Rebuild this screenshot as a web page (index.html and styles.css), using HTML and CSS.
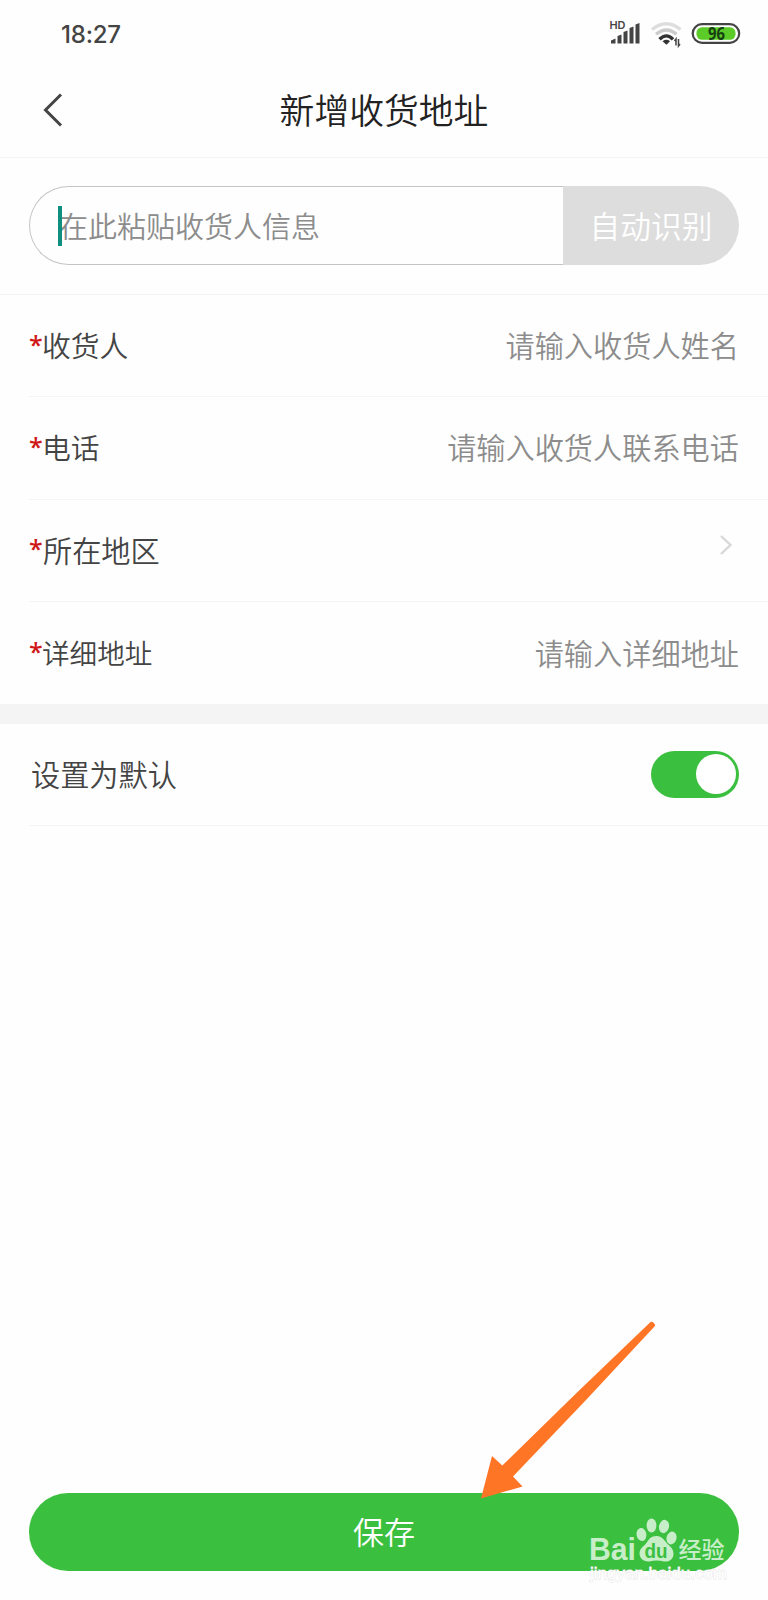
FILE: index.html
```
<!DOCTYPE html>
<html lang="zh-CN">
<head>
    <meta charset="UTF-8">
    <meta name="viewport" content="width=device-width, initial-scale=1.0">
    <title>新增收货地址</title>
    <link rel="stylesheet" href="styles.css">
</head>
<body>
    <div class="status-bar">
        <span class="time">18:27</span>
        <svg class="status-icons" width="134" height="30" viewBox="0 0 134 30">
            <text class="hd" x="-0.500" y="9" textLength="16" lengthAdjust="spacingAndGlyphs">HD</text>
            <path fill="#444" d="M1 23.500V20.500L5.500 18.500V23.500ZM7.500 23.500V16L11.500 14.500V23.500ZM13.500 23.500V12L17.500 10.500V23.500ZM19.500 23.500V8L23.500 6.500V23.500ZM25.500 23.500V4.500L29.500 3V23.500Z"/>
            <g fill="none" stroke-width="3.400">
                <path stroke="#ddd" d="M42 9.500Q56.500 -2 70.500 9.500"/>
                <path stroke="#ccc" d="M46 14.300Q56.500 5.500 66.500 14.300"/>
                <path stroke="#333" d="M49.500 19.300Q56.500 12.500 63 19.300"/>
            </g>
            <path fill="#333" d="M52.500 21.200Q56.500 18.500 60 21.200L56.500 24.700Z"/>
            <path fill="none" stroke="#444" stroke-width="1.500" d="M64.500 21L66 19V25.500M68.500 19V26L70 24"/>
            <rect x="82.700" y="4.200" width="46.500" height="18.600" rx="9.300" fill="#fff" stroke="#444" stroke-width="2.200"/>
            <rect x="86.500" y="7.200" width="39" height="12.600" rx="5.500" fill="#5bcb27"/>
            <text class="battery" x="98" y="19.500" textLength="17" lengthAdjust="spacingAndGlyphs">96</text>
        </svg>
    </div>
    <header>
        <svg class="back" width="22" height="36" viewBox="0 0 22 36">
            <path fill="none" stroke="#444" stroke-width="3" d="M18 2.500L2.500 18L18 33.500"/>
        </svg>
        <h1>新增收货地址</h1>
    </header>
    <div class="paste-box">
        <div class="paste-field">
            <input type="text" placeholder="在此粘贴收货人信息">
            <span class="caret"></span>
        </div>
        <button type="button" class="recognize">自动识别</button>
    </div>
    <form id="address-form">
        <div class="row">
            <label for="name"><span class="star">*</span>收货人</label>
            <input type="text" id="name" placeholder="请输入收货人姓名">
        </div>
        <div class="row">
            <label for="phone"><span class="star">*</span>电话</label>
            <input type="tel" id="phone" placeholder="请输入收货人联系电话">
        </div>
        <div class="row">
            <label class="wide"><span class="star">*</span>所在地区</label>
            <svg class="chevron" width="14" height="22" viewBox="0 0 14 22">
                <path fill="none" stroke="#d8d8d8" stroke-width="2.400" d="M2 2L11.500 11L2 20"/>
            </svg>
        </div>
        <div class="row last">
            <label class="narrow" for="detail"><span class="star">*</span>详细地址</label>
            <input type="text" id="detail" placeholder="请输入详细地址">
        </div>
    </form>
    <div class="divider"></div>
    <div class="row default-row">
        <span>设置为默认</span>
        <div class="toggle"><div class="knob"></div></div>
    </div>
    <footer>
        <button type="submit" form="address-form" id="save-button">保存</button>
        <svg class="arrow" width="180" height="182" viewBox="0 0 180 182">
            <path fill="#ff7526" d="M1 178.500L12 136L22.300 145.500L97 72.500L170 2.500Q172 1 173.500 2.800Q176 5 174.500 6.500L106 80L33 156.500L42.500 166.500Z"/>
        </svg>
        <svg class="watermark" width="142" height="70" viewBox="0 0 142 70">
            <text class="logo" x="1" y="45" textLength="47" lengthAdjust="spacingAndGlyphs">Bai</text>
            <g class="paw">
                <ellipse cx="53.500" cy="19.500" rx="4.900" ry="6.600" transform="rotate(-8 53.500 19.500)"/>
                <ellipse cx="63.500" cy="10.500" rx="4.900" ry="7"/>
                <ellipse cx="76" cy="11.500" rx="5" ry="6.700" transform="rotate(12 76 11.500)"/>
                <ellipse cx="83.500" cy="23" rx="5" ry="6.500" transform="rotate(15 83.500 23)"/>
                <path d="M68.500 21C74 21 76 25 79.500 29C83 32 85.500 34 85.500 39C85 45 81 47 76 46.500Q68.500 44.500 61.500 46.500C55 47 51.500 43 51.500 38C52 33 55 32 58 28.500C61 24 63 21 68.500 21Z"/>
            </g>
            <text class="du" x="56.500" y="43" textLength="23" lengthAdjust="spacingAndGlyphs">du</text>
            <text class="jingyan" x="90.500" y="43" textLength="46" lengthAdjust="spacingAndGlyphs">经验</text>
            <text class="url" x="2" y="63.500" textLength="137" lengthAdjust="spacingAndGlyphs">jingyan.baidu.com</text>
        </svg>
    </footer>
</body>
</html>
```
FILE: styles.css
```
* {
    box-sizing: border-box;
}
body {
    font-family: "Noto Sans CJK SC", sans-serif;
    font-weight: 350;
    font-size: 29.2px;
    margin: 0;
    min-height: 1600px;
    background-color: #fefefe;
    color: #444;
    display: flex;
    flex-direction: column;
}
input, button {
    font: inherit;
    border: none;
    outline: none;
    padding: 0;
    margin: 0;
    background: none;
}
input::placeholder {
    color: #8c8c8c;
    opacity: 1;
}
.status-bar {
    height: 66px;
    padding: 0 24px 0 61px;
    display: flex;
    justify-content: space-between;
    align-items: center;
}
.time {
    font-family: Inter, sans-serif;
    font-weight: 500;
    font-size: 24px;
    letter-spacing: -0.2px;
    padding-top: 3px;
}
.status-icons {
    margin-top: 4px;
    overflow: visible;
}
.hd {
    font: 600 10.5px Inter, sans-serif;
    fill: #444;
}
.battery {
    font: 700 17px "Open Sans", sans-serif;
    fill: #174012;
}
header {
    height: 92px;
    padding: 0 43px;
    border-bottom: 1px solid #f5f5f5;
    display: grid;
    grid-template-columns: 22px 1fr 22px;
    align-items: center;
}
.back {
    margin-top: -3px;
}
h1 {
    margin: -6px 0 0;
    font-size: 34.8px;
    font-weight: 350;
    line-height: 52px;
    text-align: center;
    color: #222;
}
.paste-box {
    height: 137px;
    padding: 28px 29px 29px;
    border-bottom: 1px solid #f3f3f3;
    display: flex;
}
.paste-field {
    position: relative;
    flex: 1;
    padding-left: 29px;
    display: flex;
    border: 1px solid #c4c4c4;
    border-right: none;
    border-radius: 40px 0 0 40px;
}
.paste-field input {
    width: 100%;
    padding-bottom: 2px;
    font-size: 29px;
}
.caret {
    position: absolute;
    left: 28px;
    top: 19px;
    width: 4px;
    height: 40px;
    background-color: #0f8f80;
}
.recognize {
    width: 176px;
    padding-bottom: 3px;
    border-radius: 0 40px 40px 0;
    background-color: #ddd;
    color: white;
    font-size: 30.7px;
}
.row {
    height: 102.3px;
    margin-left: 29px;
    padding-right: 29px;
    border-bottom: 1px solid #f5f5f5;
    display: flex;
    justify-content: space-between;
    align-items: center;
}
.row label {
    display: flex;
    align-items: center;
    padding-bottom: 3px;
    font-size: 28.8px;
    white-space: nowrap;
}
.row input {
    width: 400px;
    padding-bottom: 3px;
    text-align: right;
}
.row .wide {
    font-size: 29.2px;
}
.row .narrow {
    font-size: 27.6px;
}
.star {
    width: 13px;
    height: 37px;
    font-family: "Open Sans", sans-serif;
    font-size: 25px;
    line-height: 36px;
    font-weight: 600;
    color: #d01818;
}
.wide .star {
    width: 14px;
}
.chevron {
    margin: -11px 6px 0 0;
}
.last {
    border-bottom: none;
}
.divider {
    height: 20px;
    background-color: #f4f4f4;
}
.default-row span {
    padding: 0 0 3px 2px;
}
.toggle {
    width: 88px;
    height: 47px;
    padding: 3px;
    border-radius: 24px;
    background-color: #3bbf3f;
    display: flex;
    justify-content: flex-end;
}
.knob {
    width: 40px;
    height: 40px;
    border-radius: 50%;
    background-color: white;
}
footer {
    position: relative;
    margin-top: auto;
    padding: 0 29px 29px;
}
#save-button {
    display: block;
    width: 100%;
    height: 78px;
    padding-bottom: 4px;
    border-radius: 40px;
    background-color: #3bbf3f;
    color: white;
    font-size: 31px;
}
/* drawn over the save button */
.arrow {
    position: absolute;
    left: 480px;
    top: -173px;
}
.watermark {
    position: absolute;
    left: 588px;
    top: 22px;
}
.paw, .logo, .jingyan {
    fill: #c7eec8;
}
.logo {
    font: 700 31px "Liberation Sans", sans-serif;
}
.du {
    font: 700 20px "Liberation Sans", sans-serif;
    fill: #3bbf3f;
}
.jingyan {
    font: 500 23px "Noto Sans CJK SC", sans-serif;
}
.url {
    font: 400 16px "Liberation Sans", sans-serif;
    fill: #fff;
    stroke: #e4e4e4;
    stroke-width: 0.8px;
    paint-order: stroke;
}
```
